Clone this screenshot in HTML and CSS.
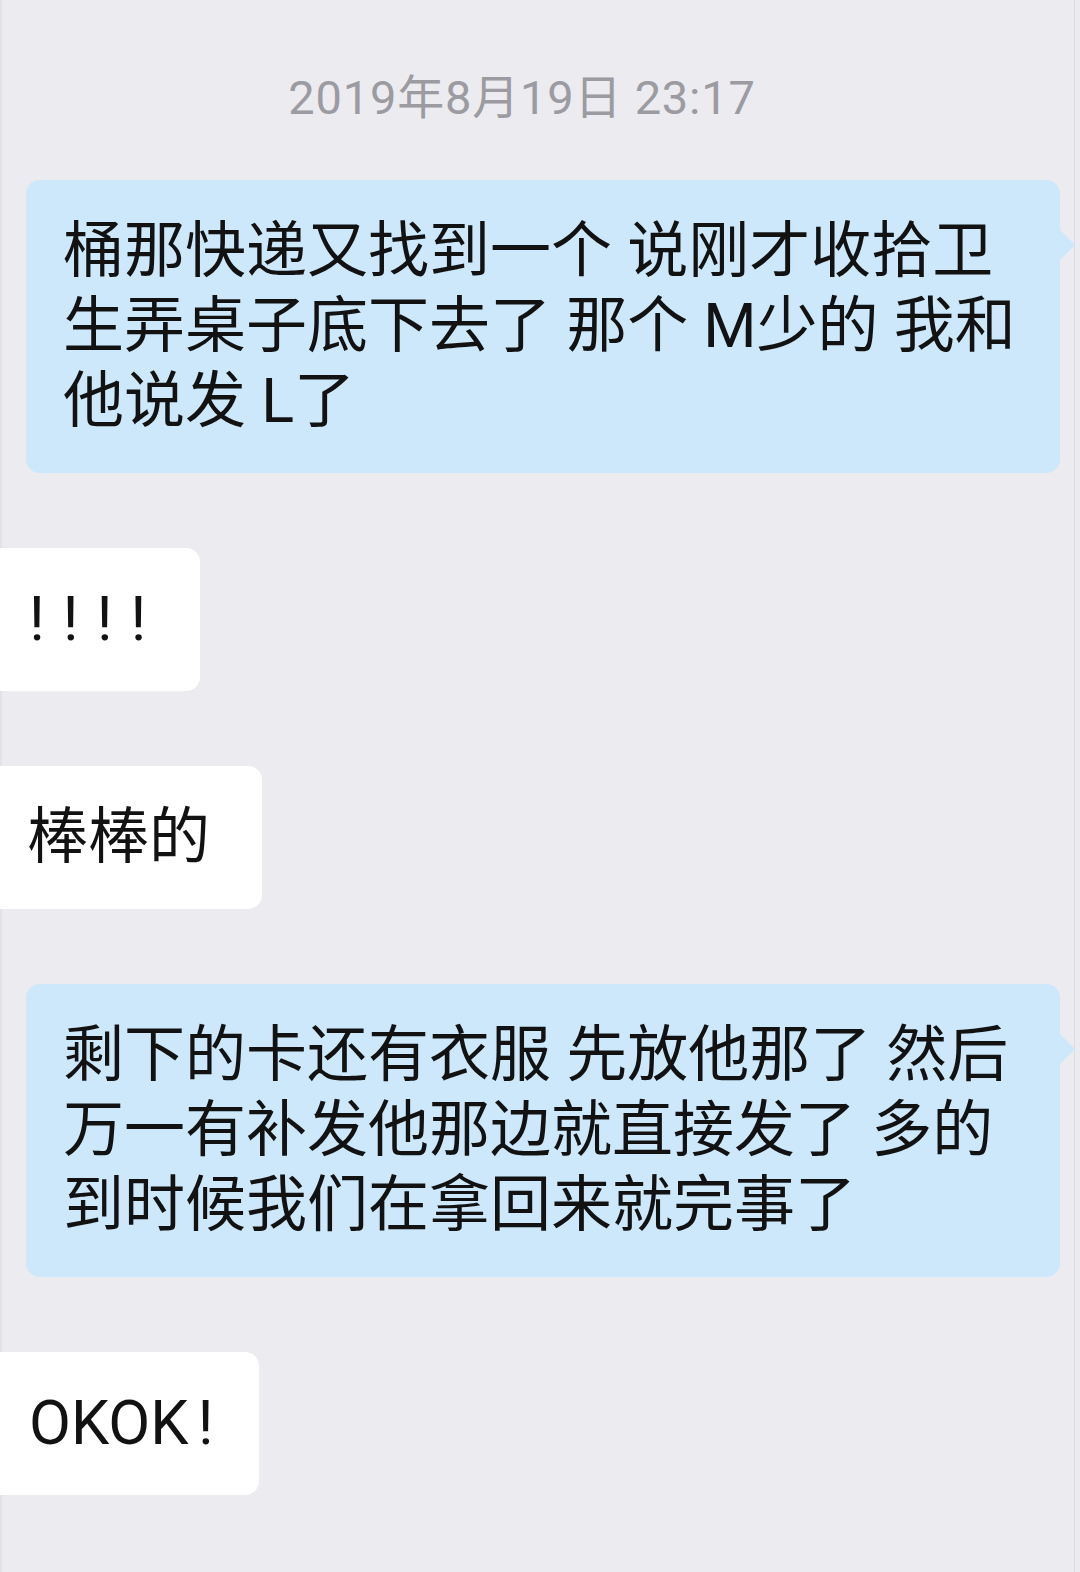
FILE: index.html
```html
<!DOCTYPE html>
<html lang="zh-CN">
<head>
<meta charset="utf-8">
<title>聊天记录</title>
<link rel="stylesheet" href="styles.css">
</head>
<body>
<div class="screen">
  <div class="time">2019年8月19日 23:17</div>
  <div class="chat">
    <div class="bubble out">桶那快递又找到一个 说刚才收拾卫<br>生弄桌子底下去了 那个 M少的 我和<br>他说发 L了</div>
    <div class="bubble in excl">! ! ! !</div>
    <div class="bubble in">棒棒的</div>
    <div class="bubble out">剩下的卡还有衣服 先放他那了 然后<br>万一有补发他那边就直接发了 多的<br>到时候我们在拿回来就完事了</div>
    <div class="bubble in okok">OKOK !</div>
  </div>
</div>
</body>
</html>
```

FILE: styles.css
```css
html, body {
  margin: 0;
  padding: 0;
}

body {
  width: 1080px;
  height: 1572px;
  background: #ebebf0;
  overflow: hidden;
  font-family: Roboto, "Noto Sans CJK SC", sans-serif;
}

.screen {
  width: 1075px;
  height: 1572px;
  box-sizing: border-box;
  border-left: 2px solid #e2e2e8;
  border-right: 1px solid #dcdce2;
  padding-top: 70px;
}

.time {
  width: 1040px;
  text-align: center;
  font-size: 47px;
  line-height: 56px;
  letter-spacing: 0.8px;
  color: #9b9ba1;
  margin-bottom: 54px;
}

.chat {
  display: flex;
  flex-direction: column;
  align-items: flex-start;
  gap: 75px;
}

.bubble {
  position: relative;
  font-size: 61px;
  line-height: 75px;
  color: #121212;
  box-sizing: border-box;
}

.out {
  width: 1034px;
  margin-left: 24px;
  padding: 34px 20px 34px 37px;
  background: #cde8fb;
  border-radius: 14px;
}

.out::after {
  content: "";
  position: absolute;
  right: -15px;
  top: 50px;
  border-left: 15px solid #cde8fb;
  border-top: 15px solid transparent;
  border-bottom: 15px solid transparent;
}

.in {
  margin-left: -2px;
  padding: 34px 52px 34px 27px;
  background: #ffffff;
  border-radius: 0 14px 14px 0;
}

.excl {
  letter-spacing: 1.5px;
  padding-left: 29px;
}

.okok {
  word-spacing: -6px;
  padding-left: 29px;
  padding-right: 46px;
}
```
